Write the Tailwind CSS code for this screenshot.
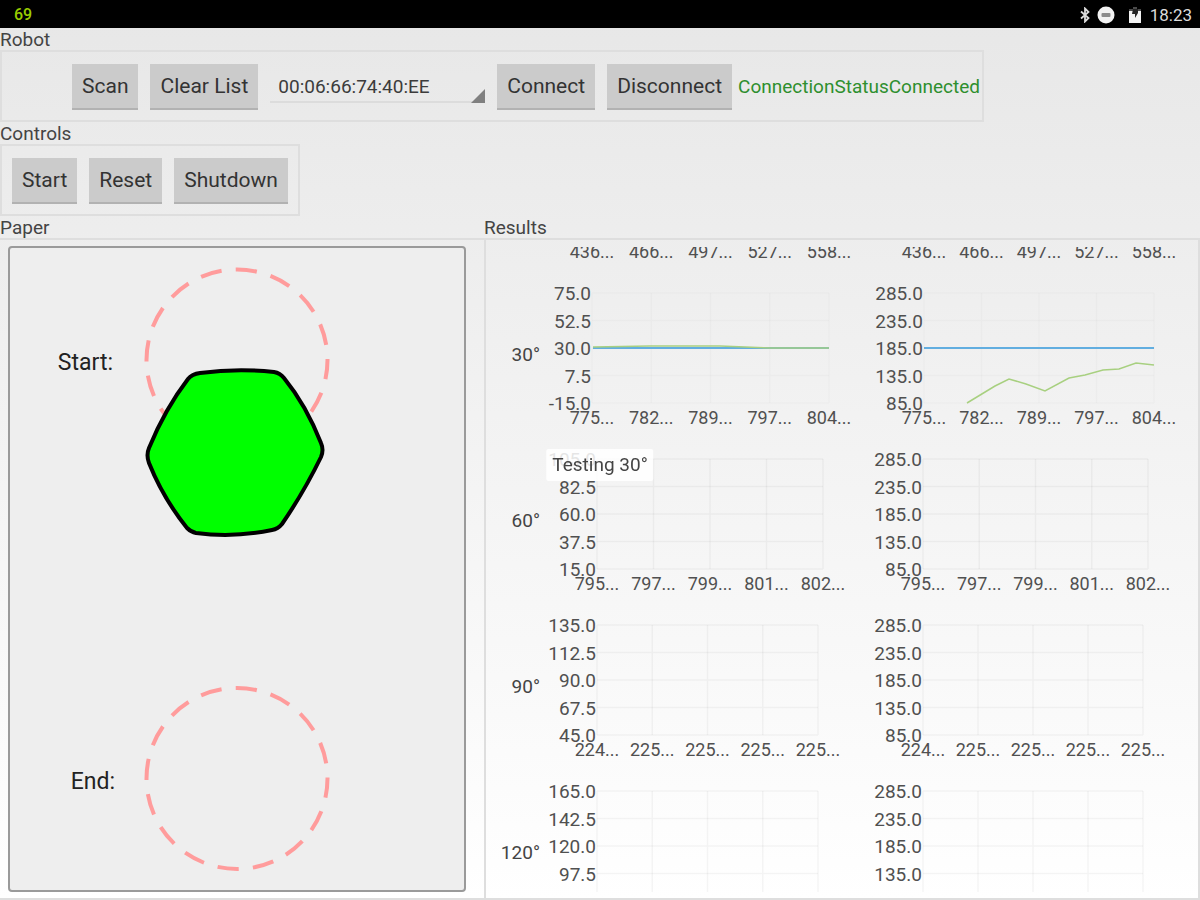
<!DOCTYPE html>
<html lang="en">
<head>
    <meta charset="UTF-8">
    <meta name="viewport" content="width=device-width, initial-scale=1.0">
    <title>Robot</title>
    <script src="https://cdn.jsdelivr.net/npm/@tailwindcss/browser@4"></script>
</head>
<body class="h-screen flex flex-col overflow-hidden bg-linear-to-b from-[#e7e7e7] to-white font-['Roboto',sans-serif] text-[19px] leading-6 text-[#444]">
    <!-- Status bar -->
    <header class="h-7 shrink-0 flex items-center justify-between bg-black pl-3.5 pr-2 pt-0.5 text-[17px]">
        <span class="font-medium text-base text-[#99cc00]">69</span>
        <div class="flex items-center text-[#dcdcdc]">
            <svg class="w-2.5 h-4 mr-[7px]" viewBox="0 0 10 16" fill="none" stroke="#dcdcdc" stroke-width="1.8"><path d="M1 4.5 8.5 11 5 14.5V1.5L8.5 5 1 11.5"/></svg>
            <svg class="w-[18px] h-[18px] mr-3.5" viewBox="0 0 18 18"><circle cx="9" cy="9" r="8.5" fill="#f2f2f2"/><rect x="4.5" y="7" width="9" height="4" rx="1" fill="#8c8c8c"/></svg>
            <svg class="w-3 h-4 mr-[9px]" viewBox="0 0 12 16"><path d="M4 0h4v2h4v14H0V2h4z" fill="#4a4a4a"/><path d="M0 4h12v12H0z" fill="#f2f2f2"/><path d="M4 2h5v4L6 11V7H3z" fill="#222"/></svg>
            <span>18:23</span>
        </div>
    </header>

    <section class="shrink-0">
        <h2 class="h-[22px]">Robot</h2>
        <div class="w-fit flex items-center gap-3 border-2 border-[#dedede] pt-3 pb-2.5 pl-2.5 pr-0.5">
            <div class="w-12"></div>
            <button class="h-[46px] px-2.5 bg-[#cbcbcb] border-b-2 border-[#b2b2b2] text-[21px] text-[#333]">Scan</button>
            <button class="h-[46px] px-2.5 bg-[#cbcbcb] border-b-2 border-[#b2b2b2] text-[21px] text-[#333]">Clear List</button>
            <div class="relative w-[215px]">
                <select aria-label="Device" class="appearance-none w-full h-8 pl-2 pt-0.5 border-b-2 border-[#dcdcdc] text-[#3c3c3c]">
                    <option>00:06:66:74:40:EE</option>
                </select>
                <svg class="absolute right-0 bottom-0 w-3.5 h-3.5 pointer-events-none" viewBox="0 0 14 14"><path d="M14 0v14H0z" fill="#808080"/></svg>
            </div>
            <button class="h-[46px] px-2.5 bg-[#cbcbcb] border-b-2 border-[#b2b2b2] text-[21px] text-[#333]">Connect</button>
            <div class="flex items-center gap-1.5">
                <button class="h-[46px] px-2.5 bg-[#cbcbcb] border-b-2 border-[#b2b2b2] text-[21px] text-[#333]">Disconnect</button>
                <span class="text-[#2e8f2e]">ConnectionStatusConnected</span>
            </div>
        </div>
    </section>

    <section class="shrink-0">
        <h2 class="h-[22px]">Controls</h2>
        <div class="w-fit flex gap-3 border-2 border-[#dedede] pt-3 pb-2.5 px-2.5">
            <button class="h-[46px] px-2.5 bg-[#cbcbcb] border-b-2 border-[#b2b2b2] text-[21px] text-[#333]">Start</button>
            <button class="h-[46px] px-2.5 bg-[#cbcbcb] border-b-2 border-[#b2b2b2] text-[21px] text-[#333]">Reset</button>
            <button class="h-[46px] px-2.5 bg-[#cbcbcb] border-b-2 border-[#b2b2b2] text-[21px] text-[#333]">Shutdown</button>
        </div>
    </section>

    <main class="grow min-h-0 flex">
        <section class="w-[484px] shrink-0 flex flex-col">
            <h2 class="h-[22px]">Paper</h2>
            <div class="grow min-h-0 border-y-2 border-[#dedede] pl-2 pr-[18px] py-1.5">
                <div class="h-full border-2 border-[#9a9a9a] rounded-[4px] bg-[#eeeeee]">
                    <svg class="w-full h-full" viewBox="0 0 454 642">
                        <g fill="none" stroke="#ff9c9c" stroke-width="4" stroke-dasharray="21.34 14.2" stroke-dashoffset="2">
                            <circle cx="227" cy="112" r="90.5"/>
                            <circle cx="227" cy="530.5" r="90.5"/>
                        </g>
                        <g class="text-[23px]" fill="#222" text-anchor="end">
                            <text x="103" y="122">Start:</text>
                            <text x="105" y="541">End:</text>
                        </g>
                        <!-- Robot -->
                        <path d="M190 125Q227 120 264 124Q270 125 274 130Q296 157 311 195Q314 202 311 209Q294 244 272 276Q268 281 262 282Q224 290 186 285Q181 284 177 280Q153 250 139 215Q136 207 139 200Q155 161 178 131Q182 126 190 125Z" fill="#00ff00" stroke="#000" stroke-width="4"/>
                    </svg>
                </div>
            </div>
        </section>

        <section class="grow min-w-0 flex flex-col">
            <h2 class="h-[22px]">Results</h2>
            <div class="grow min-h-0 border-2 border-[#dedede] px-1.5 pt-[7px] pb-1.5">
                <div class="h-full overflow-hidden">
                    <!-- scrolled part way past the first row -->
                    <div id="results" class="-mt-[141px]"></div>
                </div>
            </div>
        </section>
    </main>

    <div role="status" class="fixed left-1/2 top-[449px] -translate-x-1/2 h-8 px-1.5 flex items-center rounded-[2px] bg-white/85 whitespace-nowrap">Testing 30°</div>

    <script>
        const distance = ['285.0', '235.0', '185.0', '135.0', '85.0'];
        const rows = [
            { angle: '0°', x: ['436...', '466...', '497...', '527...', '558...'], opacity: 0.02,
              charts: [{ from: 52, to: 289, y: ['45.0', '22.5', '0.0', '-22.5', '-45.0'] }, { from: 58, to: 288, y: distance }] },
            { angle: '30°', x: ['775...', '782...', '789...', '797...', '804...'], opacity: 0.02,
              charts: [
                { from: 52, to: 289, y: ['75.0', '52.5', '30.0', '7.5', '-15.0'], target: 'M53 76H289', actual: 'M53 75L110 74L180 74L230 76H289' },
                { from: 58, to: 288, y: distance, target: 'M58 76H288', actual: 'M101 131L129 114L143 107L160 112L179 119L203 106L219 103L237 98L253 97L270 91L288 93' }
              ] },
            { angle: '60°', x: ['795...', '797...', '799...', '801...', '802...'], opacity: 0.04,
              charts: [{ from: 57, to: 283, y: ['105.0', '82.5', '60.0', '37.5', '15.0'] }, { from: 57, to: 282, y: distance }] },
            { angle: '90°', x: ['224...', '225...', '225...', '225...', '225...'], opacity: 0.04,
              charts: [{ from: 57, to: 278, y: ['135.0', '112.5', '90.0', '67.5', '45.0'] }, { from: 57, to: 277, y: distance }] },
            { angle: '120°', x: ['226...', '226...', '226...', '226...', '226...'], opacity: 0.04,
              charts: [{ from: 57, to: 278, y: ['165.0', '142.5', '120.0', '97.5', '75.0'] }, { from: 57, to: 277, y: distance }] }
        ];

        function drawChart(chart, row) {
            const step = (chart.to - chart.from) / 4;
            let grid = '', labels = '';
            for (let i = 0; i < 5; i++) {
                const x = chart.from + step * i;
                const y = 21 + 27.5 * i;
                grid += `<path d="M${x} 21V131M${chart.from} ${y}H${chart.to}"/>`;
                labels += `<text class="text-[19px]" x="${chart.from - 1}" y="${y + 7}" text-anchor="end">${chart.y[i]}</text>`;
                labels += `<text class="text-[18px]" x="${x}" y="152" text-anchor="middle">${row.x[i]}</text>`;
            }
            return `<svg class="w-full h-[166px]" viewBox="0 0 326 166" preserveAspectRatio="xMinYMid meet">
                <g fill="none" stroke="#000" stroke-opacity="${row.opacity}" stroke-width="1.5">${grid}</g>
                <g fill="#505050">${labels}</g>
                <path d="${chart.target || ''}" fill="none" stroke="#62aee0" stroke-width="2"/>
                <path d="${chart.actual || ''}" fill="none" stroke="#a8d080" stroke-width="1.5"/>
            </svg>`;
        }

        document.getElementById('results').innerHTML = rows.map(row => `
            <div class="grid grid-cols-[48px_1fr_1fr] items-center h-[166px]">
                <span class="text-right">${row.angle}</span>
                ${row.charts.map(chart => drawChart(chart, row)).join('')}
            </div>`).join('');
    </script>
</body>
</html>
